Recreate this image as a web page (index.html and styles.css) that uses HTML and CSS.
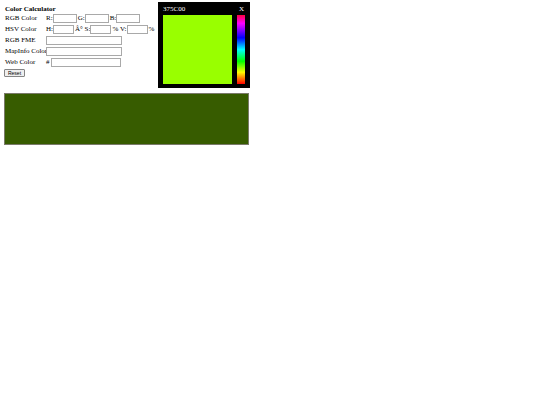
FILE: index.html
```html
<!DOCTYPE html>
<html>
<head>
<meta charset="utf-8">
<link rel="stylesheet" href="styles.css">
</head>
<body>
<div class="top">
  <div class="calc">
    <div class="title">Color Calculator</div>
    <div class="form">
      <div class="lbl">RGB Color</div>
      <div class="fld">R:<input class="in rgb" type="text">G:<input class="in rgb" type="text">B:<input class="in rgb" type="text"></div>
      <div class="lbl">HSV Color</div>
      <div class="fld">H:<input class="in hsv" type="text">Â° S:<input class="in hsv" type="text">%&nbsp;V:<input class="in hsv" type="text">%</div>
      <div class="lbl">RGB FME</div>
      <div class="fld"><input class="in wide" type="text"></div>
      <div class="lbl">MapInfo Color</div>
      <div class="fld"><input class="in wide" type="text"></div>
      <div class="lbl">Web Color</div>
      <div class="fld">#<input class="in web" type="text"></div>
    </div>
    <button class="reset" type="button">Reset</button>
  </div>
  <div class="picker">
    <div class="phead"><span>375C00</span><span>X</span></div>
    <div class="pbody">
      <div class="sq"></div>
      <div class="hue"></div>
    </div>
  </div>
</div>
<div class="swatch"></div>
</body>
</html>
```
FILE: styles.css
```css
html, body {
  margin: 0;
  padding: 0;
  background: #fff;
}
body {
  font-family: "Liberation Serif", "Times New Roman", serif;
  font-size: 7px;
  color: #000;
  padding: 2px 0 0 4px;
}
.top {
  display: flex;
  align-items: flex-start;
}
.calc {
  width: 154px;
  padding-top: 3px;
}
.title {
  font-weight: bold;
  padding-left: 1px;
  line-height: 8px;
  height: 9px;
}
.form {
  display: grid;
  grid-template-columns: 42px auto;
  row-gap: 2px;
  align-items: center;
}
.lbl {
  padding-left: 1px;
  line-height: 9px;
  white-space: nowrap;
}
.fld {
  display: flex;
  align-items: center;
  white-space: nowrap;
  line-height: 9px;
}
.in {
  box-sizing: border-box;
  height: 9px;
  margin: 0 1px 0 0;
  padding: 0;
  border: 1px solid #a9a9a9;
  background: #fff;
  font-size: 6px;
}
.rgb { width: 24px; }
.hsv { width: 21px; }
.wide { width: 76px; }
.web { width: 70px; margin-left: 1px; }
.reset {
  display: block;
  margin-top: 2px;
  width: 21px;
  height: 8px;
  padding: 0;
  font-family: "Liberation Sans", Arial, sans-serif;
  font-size: 5px;
  line-height: 6px;
  background: #efefef;
  border: 1px solid #858585;
  border-radius: 1px;
  color: #000;
}
.picker {
  background: #000;
  width: 92px;
  height: 86px;
  box-sizing: border-box;
  padding: 2px 5px 4px 5px;
  display: flex;
  flex-direction: column;
}
.phead {
  color: #fff;
  display: flex;
  justify-content: space-between;
  line-height: 10px;
  height: 11px;
  padding-right: 1px;
}
.pbody {
  display: flex;
  justify-content: space-between;
  flex: 1;
}
.sq {
  width: 69px;
  background: #99ff00;
}
.hue {
  width: 8px;
  background: linear-gradient(to bottom, #ff0040 0%, #ff00ff 12%, #0000ff 33%, #00ffff 50%, #00ff00 67%, #ffff00 83%, #ff0000 100%);
}
.swatch {
  margin-top: 5px;
  width: 245px;
  height: 52px;
  box-sizing: border-box;
  background: #375c00;
  border: 1px solid #7a7a6a;
}
```
